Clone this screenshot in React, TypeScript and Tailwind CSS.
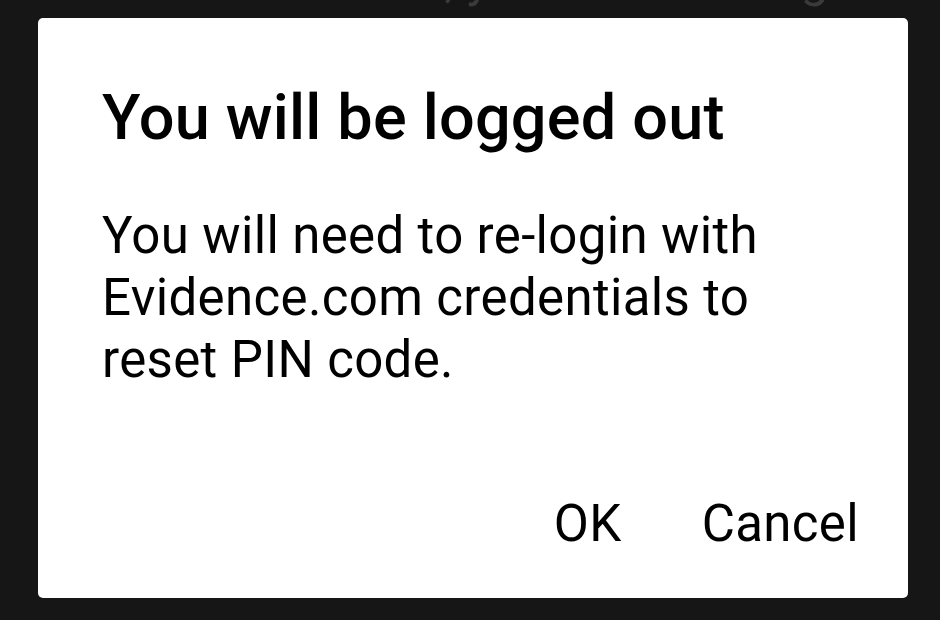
export default function App() {
  return (
    <div className="h-[620px] w-[940px] overflow-hidden bg-[#161616] font-['Roboto',sans-serif]">
      {/* dimmed content behind the dialog, only descenders peek in */}
      <p className="mt-[-47px] h-[47px] whitespace-nowrap pl-[265px] text-[50px] leading-[52px] text-[#3a3a3a]">
        account, you can then sign
      </p>
      <div className="pl-[38px] pr-[32px] pt-[18px]">
        <div className="flex h-[580px] flex-col rounded-[5px] bg-white pl-[64px] pr-[49px] pt-[63px] pb-[44px]">
          <h1 className="text-[63px] font-medium leading-[74px] tracking-[0.2px] text-black">You will be logged out</h1>
          <p className="mt-[50px] text-[51px] leading-[62px] tracking-[0.35px] text-black">
            You will need to re-login with
            <br />
            Evidence.com credentials to
            <br />
            reset PIN code.
          </p>
          <div className="mt-auto flex justify-end gap-[80px] text-[51px] leading-[60px] tracking-[0.35px] text-black">
            <button type="button">OK</button>
            <button type="button">Cancel</button>
          </div>
        </div>
      </div>
    </div>
  );
}
